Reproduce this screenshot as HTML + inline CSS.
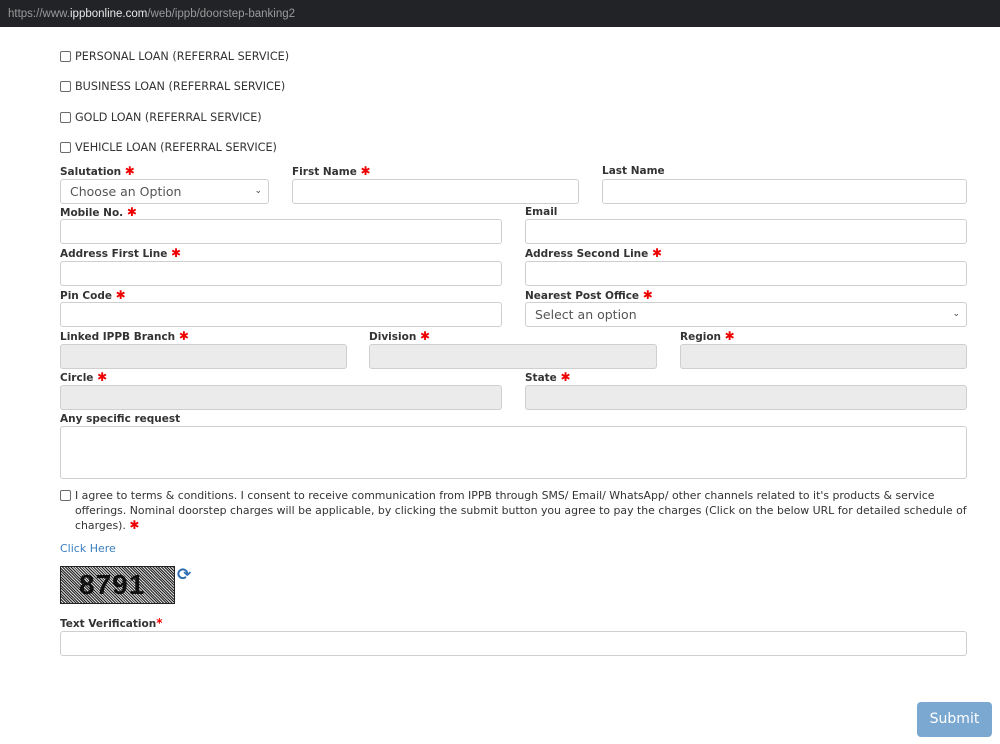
<!DOCTYPE html>
<html><head><meta charset="utf-8"><style>
*{box-sizing:border-box;margin:0;padding:0}
body{width:1000px;height:744px;background:#fff;font-family:"DejaVu Sans","Liberation Sans",sans-serif;color:#333;position:relative;overflow:hidden}
.a{position:absolute}
.bar{left:0;top:0;width:1000px;height:27px;background:#222327;color:#9a9a9a;font-size:11.5px;line-height:28px;padding-left:8px;font-family:"Liberation Sans",sans-serif}
.bar b{color:#e8e8e8;font-weight:normal}
.cb{width:11px;height:11px;border:1px solid #6b6b6b;border-radius:2px;background:#fff}
.opt{font-size:11.2px;color:#333;line-height:14px}
.lbl{font-size:10.5px;font-weight:bold;color:#333;line-height:13px}
.st{color:#e00;font-size:12px}
.in{border:1px solid #cfcfcf;border-radius:3px;background:#fff;height:25px}
.g{background:#ebebeb}
.sel{font-size:12.5px;color:#555;line-height:23px;padding-left:9px}
.chev{position:absolute;right:6px;top:0;font-size:9px;color:#444}
</style></head><body>
<div class="a bar">https://www.<b>ippbonline.com</b>/web/ippb/doorstep-banking2</div>

<div class="a cb" style="left:60px;top:51px"></div><div class="a opt" style="left:75px;top:50px">PERSONAL LOAN (REFERRAL SERVICE)</div>
<div class="a cb" style="left:60px;top:81px"></div><div class="a opt" style="left:75px;top:80px">BUSINESS LOAN (REFERRAL SERVICE)</div>
<div class="a cb" style="left:60px;top:112px"></div><div class="a opt" style="left:75px;top:111px">GOLD LOAN (REFERRAL SERVICE)</div>
<div class="a cb" style="left:60px;top:142px"></div><div class="a opt" style="left:75px;top:141px">VEHICLE LOAN (REFERRAL SERVICE)</div>

<div class="a lbl" style="left:60px;top:165px">Salutation <span class="st">✱</span></div>
<div class="a in sel" style="left:60px;top:179px;width:209px">Choose an Option<span class="chev">⌄</span></div>
<div class="a lbl" style="left:292px;top:165px">First Name <span class="st">✱</span></div>
<div class="a in" style="left:292px;top:179px;width:287px"></div>
<div class="a lbl" style="left:602px;top:165px">Last Name</div>
<div class="a in" style="left:602px;top:179px;width:365px"></div>

<div class="a lbl" style="left:60px;top:206px">Mobile No. <span class="st">✱</span></div>
<div class="a in" style="left:60px;top:219px;width:442px"></div>
<div class="a lbl" style="left:525px;top:206px">Email</div>
<div class="a in" style="left:525px;top:219px;width:442px"></div>

<div class="a lbl" style="left:60px;top:247px">Address First Line <span class="st">✱</span></div>
<div class="a in" style="left:60px;top:261px;width:442px"></div>
<div class="a lbl" style="left:525px;top:247px">Address Second Line <span class="st">✱</span></div>
<div class="a in" style="left:525px;top:261px;width:442px"></div>

<div class="a lbl" style="left:60px;top:289px">Pin Code <span class="st">✱</span></div>
<div class="a in" style="left:60px;top:302px;width:442px"></div>
<div class="a lbl" style="left:525px;top:289px">Nearest Post Office <span class="st">✱</span></div>
<div class="a in sel" style="left:525px;top:302px;width:442px">Select an option<span class="chev">⌄</span></div>

<div class="a lbl" style="left:60px;top:330px">Linked IPPB Branch <span class="st">✱</span></div>
<div class="a in g" style="left:60px;top:344px;width:287px"></div>
<div class="a lbl" style="left:369px;top:330px">Division <span class="st">✱</span></div>
<div class="a in g" style="left:369px;top:344px;width:288px"></div>
<div class="a lbl" style="left:680px;top:330px">Region <span class="st">✱</span></div>
<div class="a in g" style="left:680px;top:344px;width:287px"></div>

<div class="a lbl" style="left:60px;top:371px">Circle <span class="st">✱</span></div>
<div class="a in g" style="left:60px;top:385px;width:442px"></div>
<div class="a lbl" style="left:525px;top:371px">State <span class="st">✱</span></div>
<div class="a in g" style="left:525px;top:385px;width:442px"></div>

<div class="a lbl" style="left:60px;top:413px">Any specific request</div>
<div class="a in" style="left:60px;top:426px;width:907px;height:53px"></div>

<div class="a cb" style="left:60px;top:490px"></div>
<div class="a" style="left:75px;top:488px;width:920px;font-size:10.9px;line-height:15px;color:#333;white-space:nowrap">I agree to terms &amp; conditions. I consent to receive communication from IPPB through SMS/ Email/ WhatsApp/ other channels related to it's products &amp; service<br>offerings. Nominal doorstep charges will be applicable, by clicking the submit button you agree to pay the charges (Click on the below URL for detailed schedule of<br>charges). <span class="st">✱</span></div>

<div class="a" style="left:60px;top:542px;font-size:11px;color:#3a7fc0">Click Here</div>

<div class="a" style="left:60px;top:566px;width:115px;height:38px;border:1px solid #222;background:repeating-linear-gradient(45deg,#222 0 1px,#ddd 1px 2px);overflow:hidden">
<div style="position:absolute;left:18px;top:0;font:bold 28px/36px 'Liberation Sans',sans-serif;color:#111;letter-spacing:1px">8791</div></div>
<div class="a" style="left:177px;top:565px;font-size:17px;color:#2d6fb0;font-weight:bold">⟳</div>

<div class="a lbl" style="left:60px;top:617px">Text Verification<span class="st">*</span></div>
<div class="a in" style="left:60px;top:631px;width:907px"></div>

<div class="a" style="left:917px;top:702px;width:75px;height:35px;background:#7aa8d1;border-radius:4px;color:#fff;font-size:14px;line-height:35px;text-align:center">Submit</div>
</body></html>
